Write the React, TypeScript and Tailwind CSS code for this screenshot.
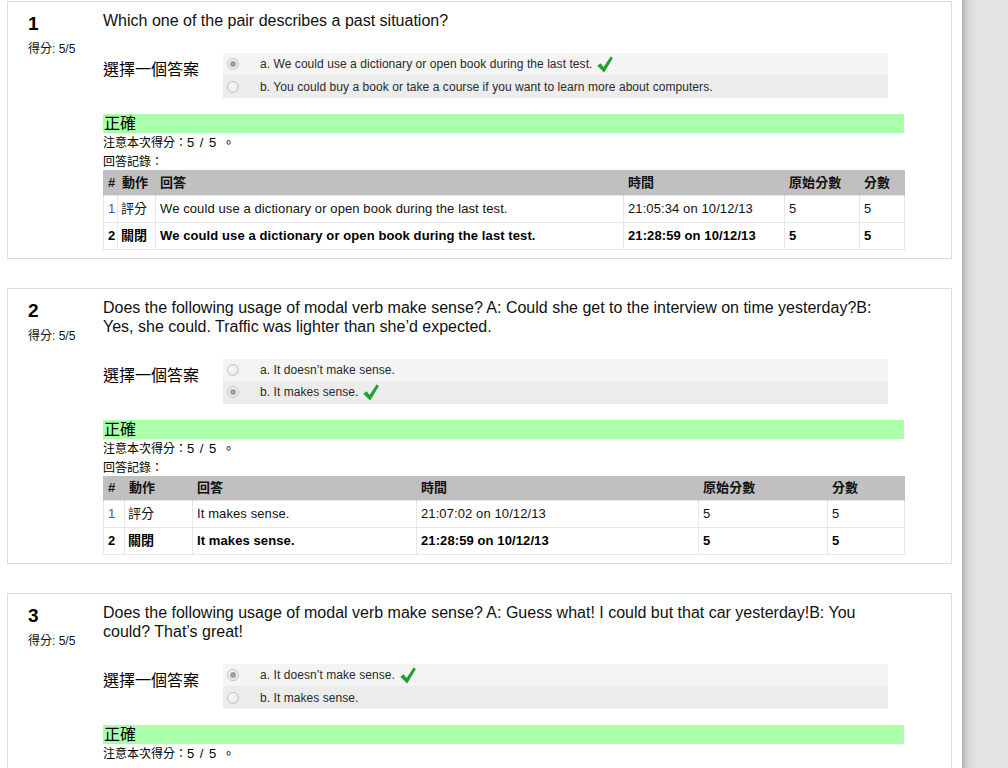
const sans = "font-['Liberation_Sans','Noto_Sans_CJK_TC',sans-serif]";

type Opt = { label: string; checked: boolean; correct: boolean };
type Row = { n: string; action: string; answer: string; time: string; raw: string; score: string; bold?: boolean };

const questions: {
  num: string;
  text: string;
  options: Opt[];
  cols: string[];
  rows: Row[];
}[] = [
  {
    num: "1",
    text: "Which one of the pair describes a past situation?",
    options: [
      { label: "a. We could use a dictionary or open book during the last test.", checked: true, correct: true },
      { label: "b. You could buy a book or take a course if you want to learn more about computers.", checked: false, correct: false },
    ],
    cols: ["w-[14px]", "w-[38px]", "w-[468px]", "w-[161px]", "w-[75px]", "w-[45px]"],
    rows: [
      { n: "1", action: "評分", answer: "We could use a dictionary or open book during the last test.", time: "21:05:34 on 10/12/13", raw: "5", score: "5" },
      { n: "2", action: "關閉", answer: "We could use a dictionary or open book during the last test.", time: "21:28:59 on 10/12/13", raw: "5", score: "5", bold: true },
    ],
  },
  {
    num: "2",
    text: "Does the following usage of modal verb make sense? A: Could she get to the interview on time yesterday?B: Yes, she could. Traffic was lighter than she’d expected.",
    options: [
      { label: "a. It doesn’t make sense.", checked: false, correct: false },
      { label: "b. It makes sense.", checked: true, correct: true },
    ],
    cols: ["w-[21px]", "w-[68px]", "w-[224px]", "w-[282px]", "w-[129px]", "w-[77px]"],
    rows: [
      { n: "1", action: "評分", answer: "It makes sense.", time: "21:07:02 on 10/12/13", raw: "5", score: "5" },
      { n: "2", action: "關閉", answer: "It makes sense.", time: "21:28:59 on 10/12/13", raw: "5", score: "5", bold: true },
    ],
  },
  {
    num: "3",
    text: "Does the following usage of modal verb make sense? A: Guess what! I could but that car yesterday!B: You could? That’s great!",
    options: [
      { label: "a. It doesn’t make sense.", checked: true, correct: true },
      { label: "b. It makes sense.", checked: false, correct: false },
    ],
    cols: [],
    rows: [],
  },
];

function Check() {
  return (
    <svg width="16" height="17" viewBox="0 0 16 17" className="ml-[5px] shrink-0">
      <path d="M0.3 9.8 L3.6 7.2 L6.6 11 L13.6 0.4 L15.9 2 L7.2 16.6 Z" fill="#1ea22f" />
    </svg>
  );
}

function Radio({ checked }: { checked: boolean }) {
  return (
    <span className="w-[12px] h-[12px] rounded-full border border-[#c4c4c4] bg-[radial-gradient(circle_at_40%_35%,#fafafa,#e2e2e2)] flex items-center justify-center shrink-0">
      {checked && <span className="w-[6px] h-[6px] rounded-full bg-[#a0a0a0]" />}
    </span>
  );
}

function History({ cols, rows }: { cols: string[]; rows: Row[] }) {
  const heads = ["#", "動作", "回答", "時間", "原始分數", "分數"];
  return (
    <table className="w-[801px] border-collapse text-[13px] tracking-[0.1px] text-[#111] table-fixed">
      <colgroup>
        {cols.map((c, i) => (
          <col key={i} className={c} />
        ))}
      </colgroup>
      <thead>
        <tr className="bg-[#c0c0c0] h-[25px]">
          {heads.map((h, i) => (
            <th key={i} className="text-left font-bold pl-[4px] pr-0 whitespace-nowrap border-x border-[#c0c0c0]">
              {h}
            </th>
          ))}
        </tr>
      </thead>
      <tbody>
        {rows.map((r) => (
          <tr key={r.n} className={`h-[27px] ${r.bold ? "font-bold text-black" : ""}`}>
            <td className={`border border-[#e8e8e8] pl-[4px] ${r.bold ? "" : "text-[#4a55b5]"}`}>{r.n}</td>
            <td className="border border-[#e8e8e8] pl-[3px] whitespace-nowrap">{r.action}</td>
            <td className="border border-[#e8e8e8] pl-[4px] whitespace-nowrap">{r.answer}</td>
            <td className="border border-[#e8e8e8] pl-[4px] whitespace-nowrap">{r.time}</td>
            <td className="border border-[#e8e8e8] pl-[4px]">{r.raw}</td>
            <td className="border border-[#e8e8e8] pl-[4px]">{r.score}</td>
          </tr>
        ))}
      </tbody>
    </table>
  );
}

export default function App() {
  return (
    <div className={`flex w-[1008px] h-[768px] overflow-hidden bg-white ${sans}`}>
      <main className="w-[962px] shrink-0 pt-[1px] pl-[7px]">
        {questions.map((q, qi) => (
          <div
            key={q.num}
            className={`w-[945px] border border-[#dcdcdc] flex pt-[9px] pb-[8px] ${qi > 0 ? "mt-[29px]" : ""}`}
          >
            <div className="w-[95px] shrink-0 pl-[20px]">
              <div className="text-[19px] font-bold leading-[22px] text-black pt-[2px]">{q.num}</div>
              <div className="text-[12px] leading-[16px] mt-[6px] text-[#111]">得分: 5/5</div>
            </div>
            <div className="w-[801px]">
              <p className="text-[16px] leading-[19px] text-[#111] pr-[28px]">{q.text}</p>
              <div className="flex mt-[23px]">
                <div className="w-[120px] shrink-0 text-[16px] leading-[18px] pt-[8px] text-black">選擇一個答案</div>
                <div className="w-[665px]">
                  {q.options.map((o, oi) => (
                    <div
                      key={oi}
                      className={`flex items-center pl-[4px] ${oi === 0 ? "h-[22px] bg-[#f4f4f4]" : "h-[23px] bg-[#ececec]"}`}
                    >
                      <Radio checked={o.checked} />
                      <span className="ml-[21px] text-[12px] tracking-[0.06px] text-[#2a2a2a] whitespace-nowrap">{o.label}</span>
                      {o.correct && <Check />}
                    </div>
                  ))}
                </div>
              </div>
              <div className="mt-[16px] bg-[#aaffaa] h-[19px] text-[16px] leading-[20px] pl-[1px] text-black">正確</div>
              <div className="text-[12px] leading-[20px] text-black">
                注意本次得分：<span className="text-[13px] tracking-[1px]">5 / 5 。</span>
              </div>
              {q.rows.length > 0 && (
                <>
                  <div className="text-[12px] leading-[15px] pt-[2px] text-black">回答記錄：</div>
                  <History cols={q.cols} rows={q.rows} />
                </>
              )}
            </div>
          </div>
        ))}
      </main>
      <aside className="flex-1 bg-[linear-gradient(to_right,#b4b4b4,#d8d8d8_6px,#e3e3e3_16px)]" />
    </div>
  );
}
